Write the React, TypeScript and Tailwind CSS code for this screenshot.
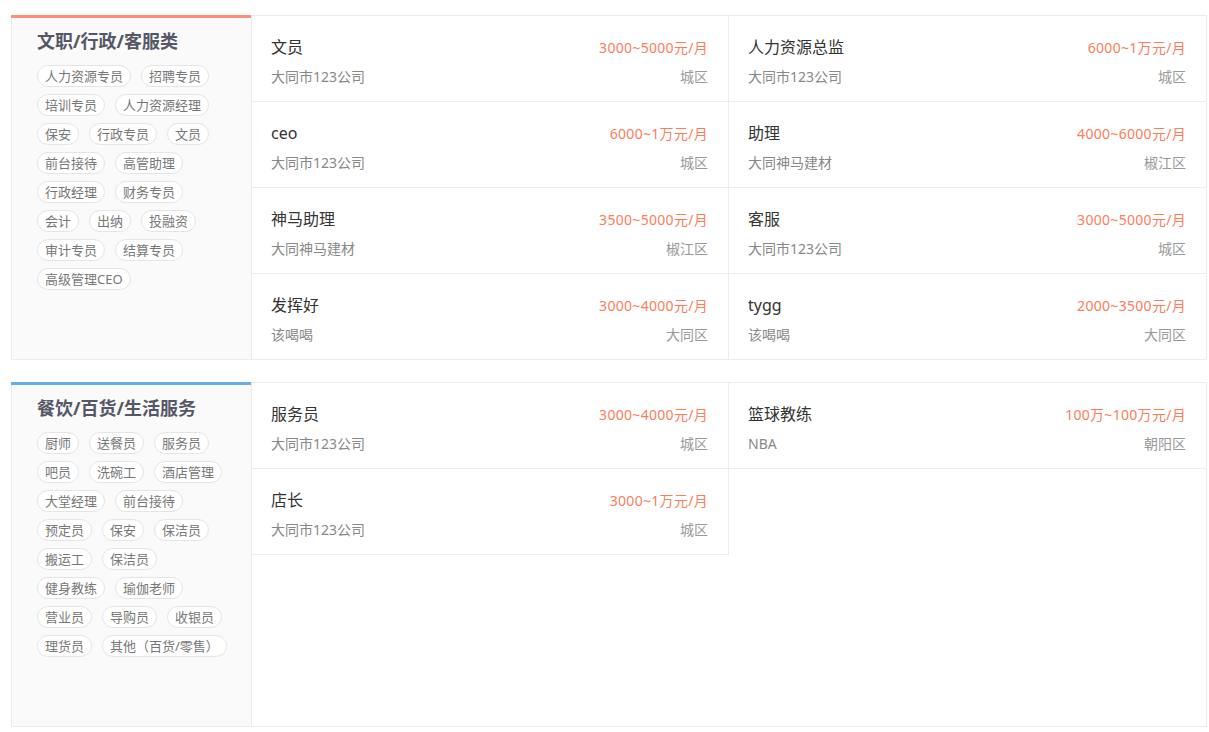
import React from 'react';

type Job = { title: string; salary: string; company: string; area: string };
type Category = { name: string; bar: string; tags: string[]; jobs: Job[] };

const categories: Category[] = [
  {
    name: '文职/行政/客服类',
    bar: 'bg-[#fd8f74]',
    tags: [
      '人力资源专员', '招聘专员', '培训专员', '人力资源经理', '保安', '行政专员', '文员',
      '前台接待', '高管助理', '行政经理', '财务专员', '会计', '出纳', '投融资',
      '审计专员', '结算专员', '高级管理CEO',
    ],
    jobs: [
      { title: '文员', salary: '3000~5000元/月', company: '大同市123公司', area: '城区' },
      { title: '人力资源总监', salary: '6000~1万元/月', company: '大同市123公司', area: '城区' },
      { title: 'ceo', salary: '6000~1万元/月', company: '大同市123公司', area: '城区' },
      { title: '助理', salary: '4000~6000元/月', company: '大同神马建材', area: '椒江区' },
      { title: '神马助理', salary: '3500~5000元/月', company: '大同神马建材', area: '椒江区' },
      { title: '客服', salary: '3000~5000元/月', company: '大同市123公司', area: '城区' },
      { title: '发挥好', salary: '3000~4000元/月', company: '该喝喝', area: '大同区' },
      { title: 'tygg', salary: '2000~3500元/月', company: '该喝喝', area: '大同区' },
    ],
  },
  {
    name: '餐饮/百货/生活服务',
    bar: 'bg-[#6aaee6]',
    tags: [
      '厨师', '送餐员', '服务员', '吧员', '洗碗工', '酒店管理', '大堂经理', '前台接待',
      '预定员', '保安', '保洁员', '搬运工', '保洁员', '健身教练', '瑜伽老师',
      '营业员', '导购员', '收银员', '理货员', '其他（百货/零售）',
    ],
    jobs: [
      { title: '服务员', salary: '3000~4000元/月', company: '大同市123公司', area: '城区' },
      { title: '篮球教练', salary: '100万~100万元/月', company: 'NBA', area: '朝阳区' },
      { title: '店长', salary: '3000~1万元/月', company: '大同市123公司', area: '城区' },
    ],
  },
];

// rows of tags as they wrap in the reference sidebar
const tagRows: number[][] = [
  [2, 2, 3, 2, 2, 3, 2, 1],
  [3, 3, 2, 3, 2, 2, 3, 2],
];

const App: React.FC = () => (
  <div className="min-h-screen bg-white pl-[11px] pr-[2px] pt-[15px] font-['Noto_Sans','Noto_Sans_CJK_SC',sans-serif]">
    {categories.map((c, ci) => (
      <Section key={c.name} cat={c} rows={tagRows[ci]} last={ci === categories.length - 1} />
    ))}
  </div>
);

const Section: React.FC<{ cat: Category; rows: number[]; last: boolean }> = ({ cat, rows, last }) => {
  let k = 0;
  const grouped = rows.map((n) => {
    const r = cat.tags.slice(k, k + n);
    k += n;
    return r;
  });
  const rowCount = Math.ceil(cat.jobs.length / 2);
  const fills = rowCount >= 4;

  return (
    <div className={`flex h-[345px] w-[1196px] border border-[#ececec] ${last ? '' : 'mb-[22px]'}`}>
      <div className="w-[240px] shrink-0 border-r border-[#ececec] bg-[#fafafa]">
        <div className={`h-[3px] -mt-px -ml-px ${cat.bar}`} />
        <div className="pl-[25px] pr-[18px] pt-[10px]">
          <h3 className="text-[18px] leading-[26px] font-bold text-[#555766]">{cat.name}</h3>
          <div className="mt-[11px]">
            {grouped.map((r, i) => (
              <div key={i} className="flex gap-[10px] mb-[7px]">
                {r.map((t, j) => (
                  <span
                    key={j}
                    className="h-[22px] px-[7px] rounded-full border border-[#e5e5e5] bg-white text-[13px] leading-[20px] text-[#777]"
                  >
                    {t}
                  </span>
                ))}
              </div>
            ))}
          </div>
        </div>
      </div>

      <div className="flex-1 grid grid-cols-2 content-start">
        {cat.jobs.map((j, i) => {
          const lastRow = Math.floor(i / 2) === rowCount - 1;
          return (
            <div
              key={i}
              className={`h-[86px] pl-[19px] pr-[20px] pt-[21px] border-[#ececec] ${i % 2 === 0 ? 'border-r' : ''} ${fills && lastRow ? 'h-[85px]' : 'border-b'}`}
            >
              <div className="flex justify-between items-center h-[20px]">
                <span className="text-[16px] text-[#333]">{j.title}</span>
                <span className="text-[14px] tracking-[0.3px] text-[#fb7d5b]">{j.salary}</span>
              </div>
              <div className="flex justify-between items-center h-[20px] mt-[9px]">
                <span className="text-[14px] text-[#888]">{j.company}</span>
                <span className="text-[14px] text-[#999]">{j.area}</span>
              </div>
            </div>
          );
        })}
      </div>
    </div>
  );
};

export default App;
